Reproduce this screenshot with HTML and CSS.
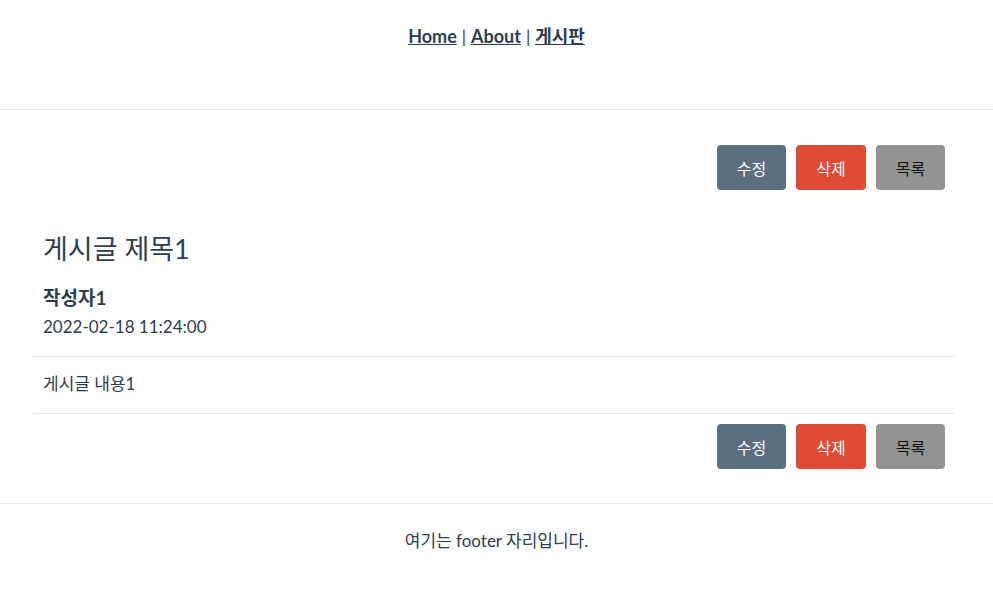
FILE: index.html
```html
<!DOCTYPE html>
<html lang="ko">
<head>
<meta charset="utf-8">
<title>게시판</title>
<link rel="stylesheet" href="styles.css">
</head>
<body>
<div class="app">
  <header class="nav">
    <a href="#">Home</a><span class="sep">|</span><a href="#">About</a><span class="sep">|</span><a href="#">게시판</a>
  </header>
  <main class="board">
    <div class="actions top">
      <button class="btn edit">수정</button>
      <button class="btn del">삭제</button>
      <button class="btn list">목록</button>
    </div>
    <section class="post">
      <h2 class="title">게시글 제목1</h2>
      <div class="author">작성자1</div>
      <div class="date">2022-02-18 11:24:00</div>
    </section>
    <div class="content">게시글 내용1</div>
    <div class="actions bottom">
      <button class="btn edit">수정</button>
      <button class="btn del">삭제</button>
      <button class="btn list">목록</button>
    </div>
  </main>
  <footer class="footer">여기는 footer 자리입니다.</footer>
</div>
</body>
</html>
```

FILE: styles.css
```css
* { box-sizing: border-box; }
html, body { margin: 0; padding: 0; background: #fff; }
body {
  font-family: Lato, "Noto Sans CJK KR", sans-serif;
  color: #2c3e50;
  -webkit-font-smoothing: antialiased;
}
.nav {
  height: 110px;
  padding-top: 24px;
  text-align: center;
  font-size: 18px;
  font-weight: 700;
  line-height: 24px;
  border-bottom: 1px solid #e8e8e8;
}
.nav a { color: #2c3e50; text-decoration: underline; }
.nav .sep { font-weight: 400; font-size: 17px; margin: 0 5px; }
.board {
  padding: 0 38px 0 33px;
}
.actions {
  display: flex;
  justify-content: flex-end;
  gap: 10px;
  padding-right: 10px;
}
.actions.top { padding-top: 35px; }
.actions.bottom { padding-top: 10px; padding-bottom: 34px; }
.btn {
  width: 69px;
  height: 45px;
  border: none;
  border-radius: 4px;
  font-family: inherit;
  font-size: 16px;
  cursor: pointer;
}
.btn.del { width: 70px; }
.btn.edit { background: #5c6f80; color: #fff; }
.btn.del { background: #e04b35; color: #fff; }
.btn.list { background: #939393; color: #111; }
.post {
  padding: 42px 10px 19px;
  border-bottom: 1px solid #e8e8e8;
}
.title {
  margin: 0 0 19px;
  font-size: 27px;
  font-weight: 400;
  line-height: 34px;
}
.author {
  font-size: 19px;
  font-weight: 700;
  line-height: 26px;
  margin-bottom: 6px;
}
.date {
  font-size: 17px;
  line-height: 20px;
}
.content {
  padding: 17px 10px 19px;
  font-size: 17px;
  line-height: 20px;
  border-bottom: 1px solid #e8e8e8;
}
.footer {
  border-top: 1px solid #e8e8e8;
  text-align: center;
  padding-top: 27px;
  height: 107px;
  font-size: 17px;
  line-height: 20px;
}
```
